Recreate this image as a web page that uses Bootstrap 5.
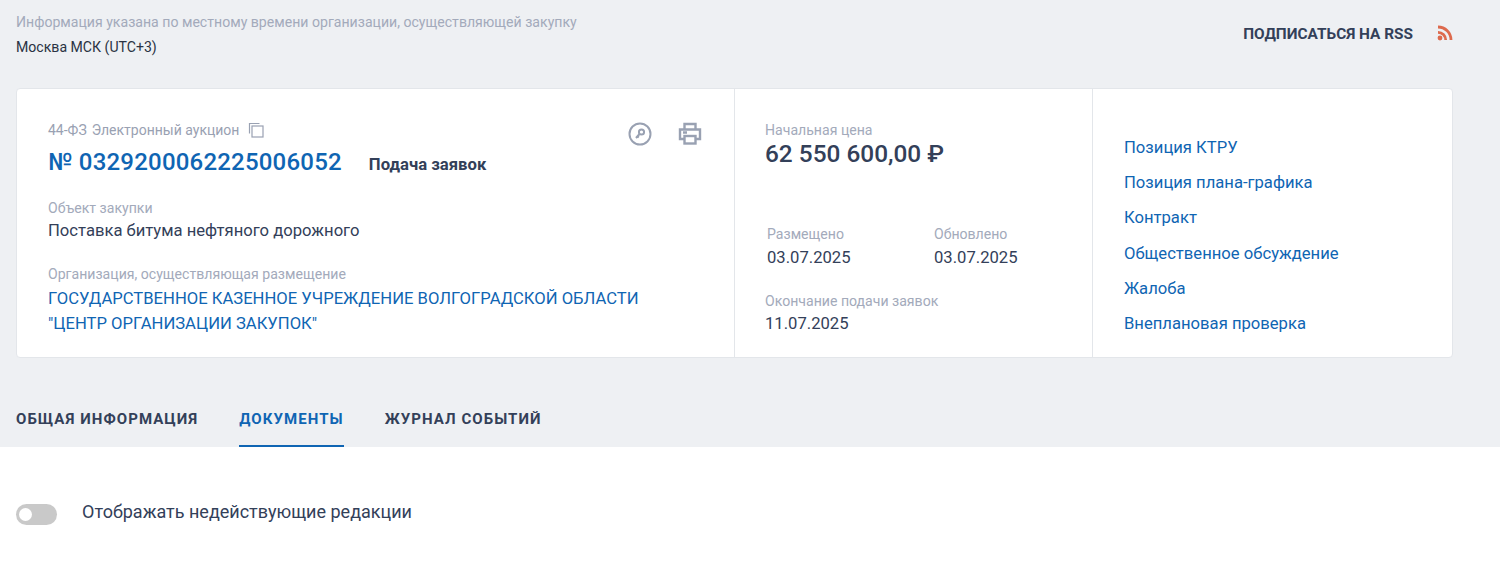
<!DOCTYPE html>
<html lang="ru"><head><meta charset="utf-8"><title>Закупка</title>
<link href="https://cdn.jsdelivr.net/npm/bootstrap@5.3.0/dist/css/bootstrap.min.css" rel="stylesheet">
<style>
html,body{height:561px;overflow:hidden}
body{font-family:Roboto,"Liberation Sans",sans-serif;background:#fff;color:#334059;font-size:16px}
.head-zone{background:#eef0f3;height:447px;padding:0 16px}
.tz-bar{width:1437px;height:88px;padding-top:13px}
.tz-note{font-size:14.1px;line-height:18px;color:#a3aabb}
.tz-city{font-size:14.1px;line-height:18px;color:#2a3343;margin-top:7px}
.rss-link{font-size:15.36px;font-weight:700;color:#334059;text-decoration:none;margin-top:12px;line-height:18px;gap:24px}
.main-panel{width:1437px;height:270px;background:#fff;border:1px solid #e3e6ea;border-radius:4px;overflow:hidden}
.pane-a{width:718px;padding:32px 31px 0;border-right:1px solid #e3e6ea;position:relative}
.pane-b{width:358px;padding:32px 0 0 30px;border-right:1px solid #e3e6ea}
.pane-c{flex:1;padding:49px 0 0 31px}
.cap{font-size:14.1px;line-height:18px;color:#a3aabb}
.kind{font-size:14px;line-height:18px;color:#99a1b2;gap:9px}
.kind-type{margin-left:5px}
.reg-num{font-size:24px;letter-spacing:.2px;font-weight:500;line-height:32px;color:#0f65b3;text-decoration:none}
.stage{font-size:16.7px;font-weight:700;color:#334059;margin-left:27px;line-height:20px;padding-top:5px}
.val{font-size:16.64px;line-height:24px;color:#334059}
.org-link{font-size:16.64px;line-height:25px;color:#0f65b3;text-decoration:none;display:block}
.tools{position:absolute;top:33px;right:32px;gap:26px}
.price{font-size:24.4px;font-weight:500;line-height:28px;margin-top:1px;color:#334059}
.dates{padding-left:2px;margin-top:57px}
.date-col{flex:0 0 167px}
.side-link{display:block;font-size:16.64px;line-height:20px;margin-bottom:15.2px;color:#0f65b3;text-decoration:none}
.tab-row{gap:41px;margin-top:49px}
.tab-item{font-size:15px;font-weight:700;letter-spacing:1.06px;color:#334059;text-decoration:none;height:40px;line-height:24px;display:block}
.tab-item.on{color:#0f65b3;border-bottom:2px solid #0f65b3}
.toggle-row{padding:53px 16px 0;gap:25px}
.fake-switch{width:41px;height:21px;border-radius:11px;background:#c9c9c9;position:relative;display:block}
.fake-switch::before{content:"";position:absolute;left:3px;top:4px;width:13px;height:13px;border-radius:50%;background:#fff}
.toggle-label{font-size:18px;line-height:24px;color:#334059;margin-bottom:4px}
</style></head><body>
<div class="head-zone">
  <div class="tz-bar d-flex justify-content-between">
    <div><div class="tz-note">Информация указана по местному времени организации, осуществляющей закупку</div><div class="tz-city">Москва МСК (UTC+3)</div></div>
    <a class="rss-link d-flex align-items-start" href="#"><span>ПОДПИСАТЬСЯ НА RSS</span>
      <svg width="16" height="16" viewBox="0 0 16 16" fill="none" stroke="#dd6a4d" stroke-width="2.8"><circle cx="3" cy="13" r="2.400" fill="#dd6a4d" stroke="none"/><path d="M1 7.300a7.700 7.700 0 0 1 7.700 7.700M1 2A13 13 0 0 1 14 15"/></svg></a>
  </div>
  <div class="main-panel d-flex">
    <div class="pane-a">
      <div class="kind d-flex align-items-center"><span>44-ФЗ<span class="kind-type">Электронный аукцион</span></span>
        <svg width="16" height="16" viewBox="0 0 16 16" fill="none" stroke="#99a1b2" stroke-width="1.2"><path d="M1.500 11.500V1.500h10"/><rect x="4" y="4" width="11" height="11"/></svg></div>
      <div class="d-flex align-items-center" style="margin-top:7px"><a class="reg-num" href="#">№ 0329200062225006052</a><span class="stage">Подача заявок</span></div>
      <div class="cap" style="margin-top:21px">Объект закупки</div>
      <div class="val" style="margin-top:2px">Поставка битума нефтяного дорожного</div>
      <div class="cap" style="margin-top:22px">Организация, осуществляющая размещение</div>
      <a class="org-link" href="#" style="margin-top:3px">ГОСУДАРСТВЕННОЕ КАЗЕННОЕ УЧРЕЖДЕНИЕ ВОЛГОГРАДСКОЙ ОБЛАСТИ<br>"ЦЕНТР ОРГАНИЗАЦИИ ЗАКУПОК"</a>
      <div class="tools d-flex">
        <svg width="24" height="24" viewBox="0 0 24 24" fill="none" stroke="#99a1b2" stroke-width="2"><circle cx="12" cy="12" r="10.500"/><circle cx="13.500" cy="10" r="2.600"/><path d="M11.500 12l-3.500 4M9.500 14.200l1.300 1.200"/></svg>
        <svg width="24" height="24" viewBox="0 0 24 24" fill="none" stroke="#99a1b2" stroke-width="2.400"><path d="M6.500 7V2h11v5M6.500 17H2V7.500h20V17h-4.500"/><rect x="6.500" y="14" width="11" height="7.500"/><path d="M5 10.500h4"/></svg>
      </div>
    </div>
    <div class="pane-b">
      <div class="cap">Начальная цена</div>
      <div class="price">62 550 600,00 ₽</div>
      <div class="dates d-flex">
        <div class="date-col"><div class="cap">Размещено</div><div class="val" style="margin-top:3px">03.07.2025</div></div>
        <div class="date-col"><div class="cap">Обновлено</div><div class="val" style="margin-top:3px">03.07.2025</div></div>
      </div>
      <div class="cap" style="margin-top:22px">Окончание подачи заявок</div>
      <div class="val" style="margin-top:2px">11.07.2025</div>
    </div>
    <div class="pane-c">
      <a class="side-link" href="#">Позиция КТРУ</a>
      <a class="side-link" href="#">Позиция плана-графика</a>
      <a class="side-link" href="#">Контракт</a>
      <a class="side-link" href="#">Общественное обсуждение</a>
      <a class="side-link" href="#">Жалоба</a>
      <a class="side-link" href="#">Внеплановая проверка</a>
    </div>
  </div>
  <div class="tab-row d-flex">
    <a class="tab-item" href="#">ОБЩАЯ ИНФОРМАЦИЯ</a>
    <a class="tab-item on" href="#">ДОКУМЕНТЫ</a>
    <a class="tab-item" href="#">ЖУРНАЛ СОБЫТИЙ</a>
  </div>
</div>
<div class="toggle-row d-flex align-items-center"><span class="fake-switch"></span><span class="toggle-label">Отображать недействующие редакции</span></div>
<script src="https://cdn.jsdelivr.net/npm/bootstrap@5.3.0/dist/js/bootstrap.bundle.min.js"></script>
</body></html>
